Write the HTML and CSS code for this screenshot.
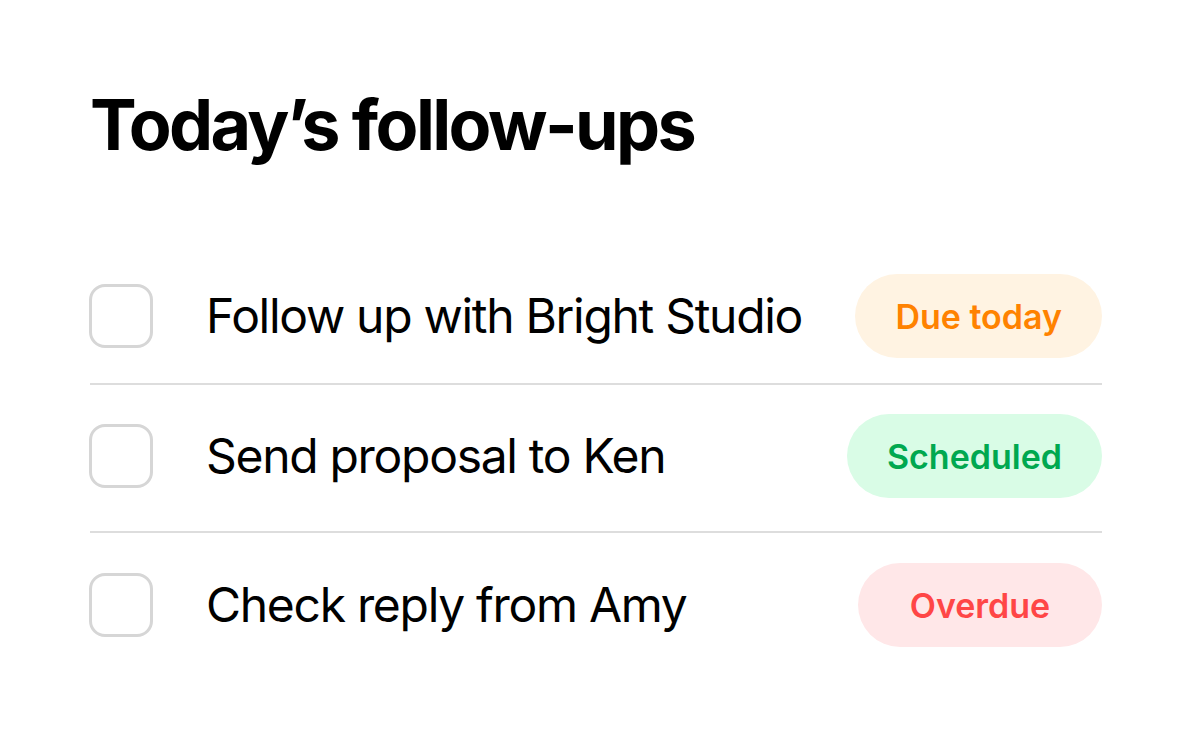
FILE: index.html
```html
<!DOCTYPE html>
<html lang="en">
<head>
<meta charset="utf-8">
<title>Today's follow-ups</title>
<link rel="stylesheet" href="styles.css">
</head>
<body>
<main class="page">
  <h1 class="title">Today’s follow-ups</h1>
  <ul class="list">
    <li class="row row-first">
      <span class="check"></span>
      <span class="label">Follow up with Bright Studio</span>
      <span class="pill pill-due">Due today</span>
    </li>
    <li class="row">
      <span class="check"></span>
      <span class="label">Send proposal to Ken</span>
      <span class="pill pill-scheduled">Scheduled</span>
    </li>
    <li class="row row-last">
      <span class="check"></span>
      <span class="label">Check reply from Amy</span>
      <span class="pill pill-overdue">Overdue</span>
    </li>
  </ul>
</main>
</body>
</html>
```
FILE: styles.css
```css
* { box-sizing: border-box; }
html, body { margin: 0; padding: 0; background: #ffffff; }
body { font-family: Inter, "Noto Sans", "Liberation Sans", sans-serif; color: #000; }

.page {
  padding: 80px 90px 0 90px;
}

.title {
  margin: 0;
  font-size: 70px;
  font-weight: 700;
  line-height: 90px;
  letter-spacing: -2.6px;
}

.list {
  list-style: none;
  margin: 104px 0 0 0;
  padding: 0;
}

.row {
  display: flex;
  align-items: center;
  padding: 29px 0 33px 0;
  border-bottom: 2px solid #dddddd;
}
.row-first { padding-top: 0; padding-bottom: 25px; }
.row-last { padding-top: 30px; border-bottom: none; }

.check {
  flex: none;
  width: 64px;
  height: 64px;
  border: 3px solid #d6d6d6;
  border-radius: 16px;
  margin-left: -1px;
}

.label {
  flex: 1;
  margin-left: 53px;
  font-size: 48px;
  font-weight: 400;
  line-height: 60px;
  letter-spacing: -1.3px;
}

.pill {
  flex: none;
  min-width: 244px;
  height: 84px;
  padding: 0 40px;
  border-radius: 42px;
  display: flex;
  align-items: center;
  justify-content: center;
  font-size: 34px;
  font-weight: 600;
}
.pill-due { background: #fff3e2; color: #ff8200; }
.pill-scheduled { background: #d9fce6; color: #00a84f; }
.pill-overdue { background: #ffe7e8; color: #ff4646; }
```
